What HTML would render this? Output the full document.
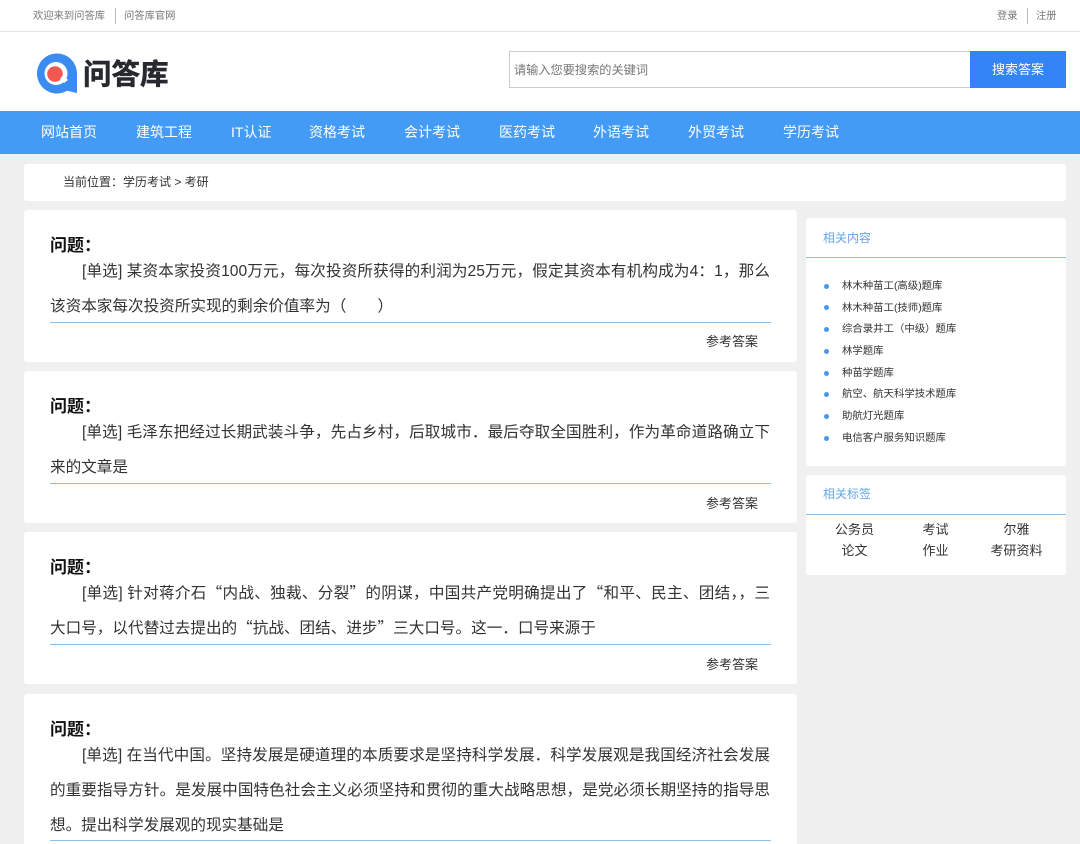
<!DOCTYPE html>
<html lang="zh">
<head>
<meta charset="utf-8">
<title>问答库</title>
<style>
*{margin:0;padding:0;box-sizing:border-box}
html,body{width:1080px;height:844px;overflow:hidden;background:#f0f0f0}
body{position:relative;font-family:"Liberation Sans","Noto Sans CJK SC",sans-serif;color:#333}
.a{position:absolute;white-space:nowrap}
.top{left:0;top:0;width:1080px;height:32px;background:#fff;border-bottom:1px solid #e4e4e4}
.t{font-size:10.300px;line-height:16px;color:#777;top:9px}
.sep{width:1px;height:16px;background:#bbb;top:8px}
.head{left:0;top:32px;width:1080px;height:79px;background:#fff}
.nav{left:0;top:111px;width:1080px;height:43px;background:#439bf5}
.nav span{position:absolute;top:0;line-height:43px;font-size:14px;color:#fff;white-space:nowrap}
.card{background:#fff;border-radius:3px}
.q{left:24px;width:773px}
.q h4{position:absolute;left:26px;top:25px;font-size:17px;line-height:22px;color:#111;font-weight:700}
.q p{position:absolute;left:26px;top:45px;width:720px;font-size:15.600px;line-height:34.800px;color:#333}
.q p span{display:block;white-space:nowrap}
.q p span.f{margin-left:32px}
.q p span.j{white-space:normal;text-align:justify;text-align-last:justify}
.q p em{font-style:normal;font-family:"Noto Sans CJK SC",sans-serif;line-height:0}
.q i{position:absolute;left:26px;width:721px;height:1px;background:#8fc0e8}
.q b{position:absolute;left:682px;font-weight:400;font-size:13px;line-height:18px;color:#333;white-space:nowrap}
.side h5{position:absolute;left:17px;font-size:12px;font-weight:400;color:#62a5ea;line-height:16px}
.li{left:842px;font-size:10.400px;line-height:14px;color:#333}
.dot{left:824px;width:5px;height:5px;border-radius:50%;background:#4a97ea}
.tag{font-size:13px;line-height:18px;color:#333;width:81px;text-align:center}
</style>
</head>
<body>
<div class="a top"></div>
<div class="a t" style="left:33px">欢迎来到问答库</div>
<div class="a sep" style="left:115px"></div>
<div class="a t" style="left:124px">问答库官网</div>
<div class="a t" style="left:997px">登录</div>
<div class="a sep" style="left:1027px"></div>
<div class="a t" style="left:1036px">注册</div>

<div class="a head"></div>
<svg class="a" style="left:36px;top:52px" width="42" height="42" viewBox="0 0 42 42">
<path d="M21 1.500A20 20 0 0 1 41 21.500V41L31 38.800A20 20 0 1 1 21 1.500Z" fill="#3b8cf0"/>
<circle cx="20" cy="21.500" r="11.500" fill="#fff"/>
<circle cx="19" cy="22" r="7.800" fill="#f2584f"/>
<path d="M24 27L28 31L32 28L27 23Z" fill="#fff"/>
</svg>
<div class="a" style="left:83px;top:56px;font-size:28.500px;line-height:38px;font-weight:700;color:#26292e;-webkit-text-stroke:.6px #26292e">问答库</div>
<div class="a" style="left:509px;top:51px;width:462px;height:37px;background:#fff;border:1px solid #ccc;font-size:12.200px;line-height:36px;color:#777;padding-left:4px">请输入您要搜索的关键词</div>
<div class="a" style="left:970px;top:51px;width:96px;height:37px;background:#3385f6;color:#fff;font-size:13px;line-height:37px;text-align:center">搜索答案</div>

<div class="a nav">
<span style="left:41px">网站首页</span>
<span style="left:136px">建筑工程</span>
<span style="left:231px">IT认证</span>
<span style="left:309px">资格考试</span>
<span style="left:404px">会计考试</span>
<span style="left:499px">医药考试</span>
<span style="left:593px">外语考试</span>
<span style="left:688px">外贸考试</span>
<span style="left:783px">学历考试</span>
</div>

<div class="a card" style="left:24px;top:164px;width:1042px;height:37px"></div>
<div class="a" style="left:63px;top:174px;font-size:12px;line-height:16px;color:#333">当前位置：学历考试 &gt; 考研</div>

<div class="a card q" style="top:210px;height:152px">
<h4>问题：</h4>
<p><span class="f j">[单选] 某资本家投资100万元，每次投资所获得的利润为25万元，假定其资本有机构成为4：1，那么</span><span>该资本家每次投资所实现的剩余价值率为（　　）</span></p>
<i style="top:112px"></i>
<b style="top:123px">参考答案</b>
</div>

<div class="a card q" style="top:371px;height:152px">
<h4>问题：</h4>
<p><span class="f j">[单选] 毛泽东把经过长期武装斗争，先占乡村，后取城市．最后夺取全国胜利，作为革命道路确立下</span><span>来的文章是</span></p>
<i style="top:112px"></i>
<b style="top:124px">参考答案</b>
</div>

<div class="a card q" style="top:532px;height:152px">
<h4>问题：</h4>
<p><span class="f j">[单选] 针对蒋介石<em>“</em>内战、独裁、分裂<em>”</em>的阴谋，中国共产党明确提出了<em>“</em>和平、民主、团结，，三</span><span>大口号，以代替过去提出的<em>“</em>抗战、团结、进步<em>”</em>三大口号。这一．口号来源于</span></p>
<i style="top:112px"></i>
<b style="top:124px">参考答案</b>
</div>

<div class="a card q" style="top:694px;height:160px">
<h4>问题：</h4>
<p><span class="f j">[单选] 在当代中国。坚持发展是硬道理的本质要求是坚持科学发展．科学发展观是我国经济社会发展</span><span class="j">的重要指导方针。是发展中国特色社会主义必须坚持和贯彻的重大战略思想，是党必须长期坚持的指导思</span><span>想。提出科学发展观的现实基础是</span></p>
<i style="top:146px"></i>
</div>

<div class="a card side" style="left:806px;top:218px;width:260px;height:248px">
<h5 style="top:12px">相关内容</h5>
<div class="a" style="left:0;top:39px;width:260px;height:1px;background:#8fc0e8"></div>
</div>
<div class="a dot" style="top:284px"></div><div class="a li" style="top:280px">林木种苗工(高级)题库</div>
<div class="a dot" style="top:305px"></div><div class="a li" style="top:302px">林木种苗工(技师)题库</div>
<div class="a dot" style="top:327px"></div><div class="a li" style="top:323px">综合录井工（中级）题库</div>
<div class="a dot" style="top:349px"></div><div class="a li" style="top:345px">林学题库</div>
<div class="a dot" style="top:371px"></div><div class="a li" style="top:367px">种苗学题库</div>
<div class="a dot" style="top:392px"></div><div class="a li" style="top:388px">航空、航天科学技术题库</div>
<div class="a dot" style="top:414px"></div><div class="a li" style="top:410px">助航灯光题库</div>
<div class="a dot" style="top:436px"></div><div class="a li" style="top:432px">电信客户服务知识题库</div>

<div class="a card side" style="left:806px;top:475px;width:260px;height:100px">
<h5 style="top:11px">相关标签</h5>
<div class="a" style="left:0;top:39px;width:260px;height:1px;background:#8fc0e8"></div>
</div>
<div class="a tag" style="left:814px;top:521px">公务员</div>
<div class="a tag" style="left:895px;top:521px">考试</div>
<div class="a tag" style="left:976px;top:521px">尔雅</div>
<div class="a tag" style="left:814px;top:542px">论文</div>
<div class="a tag" style="left:895px;top:542px">作业</div>
<div class="a tag" style="left:976px;top:542px">考研资料</div>
</body>
</html>
